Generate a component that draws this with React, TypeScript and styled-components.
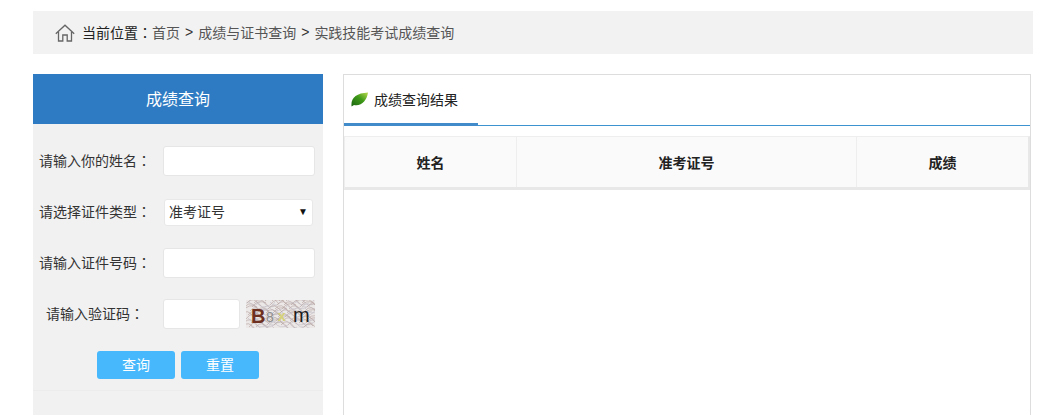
import styled, { createGlobalStyle } from "styled-components";

const GlobalStyle = createGlobalStyle`
  html, body {
    margin: 0;
    padding: 0;
    background: #fff;
    overflow: hidden;
  }
  body {
    font-family: "Liberation Sans", "Noto Sans CJK SC", sans-serif;
    font-size: 14px;
    color: #333;
  }
`;

const Page = styled.div`
  width: 1000px;
  height: 415px;
  margin-left: 33px;
  padding-top: 11px;
  box-sizing: border-box;
  overflow: hidden;
`;

const Crumbs = styled.div`
  height: 43px;
  background: #f2f2f2;
  display: flex;
  align-items: center;
  padding: 0 0 2px 22px;
  box-sizing: border-box;
  font-size: 14px;
  color: #555;
  svg {
    margin: 2px 7px 0 0;
  }
  b {
    font-weight: normal;
    color: #222;
  }
  i {
    font-style: normal;
    margin: 0 5px;
    color: #333;
  }
`;

// the source page centres its full-width colons, which the TC cut of the font does too
const Colon = styled.span`
  font-family: "Noto Sans CJK TC", sans-serif;
`;

const Main = styled.div`
  display: flex;
  gap: 20px;
  margin-top: 20px;
`;

const Side = styled.div`
  width: 290px;
  height: 341px;
  background: #f1f1f2;
  flex: none;
`;

const SideTitle = styled.div`
  height: 50px;
  line-height: 51px;
  background: #2e7bc3;
  color: #fff;
  font-size: 16px;
  text-align: center;
`;

const Form = styled.div`
  padding-top: 22px;
  height: 244px;
  border-bottom: 1px solid #ececec;
  display: flex;
  flex-direction: column;
  gap: 21px;
`;

const FormRow = styled.div`
  display: flex;
  align-items: center;
  height: 30px;
`;

const Label = styled.label<{ $indent?: number }>`
  width: 130px;
  padding: 0 0 2px ${(p) => p.$indent ?? 6}px;
  box-sizing: border-box;
  flex: none;
  color: #333;
  white-space: nowrap;
`;

const TextBox = styled.div<{ $short?: boolean }>`
  width: ${(p) => (p.$short ? 77 : 152)}px;
  height: 30px;
  background: #fff;
  border: 1px solid #e6e6e6;
  border-radius: 3px;
  box-sizing: border-box;
`;

const SelectBox = styled.div`
  width: 149px;
  height: 27px;
  margin-left: 1px;
  background: #fff;
  border: 1px solid #e8e8e8;
  border-radius: 3px;
  box-sizing: border-box;
  display: flex;
  align-items: center;
  justify-content: space-between;
  padding: 0 4px 2px 4px;
  color: #333;
  span {
    font-size: 10px;
    color: #111;
  }
`;

const Captcha = styled.svg`
  margin-left: 6px;
  flex: none;
`;

const Buttons = styled.div`
  display: flex;
  justify-content: center;
  gap: 6px;
  margin-top: 1px;
`;

const Btn = styled.div`
  width: 78px;
  height: 28px;
  line-height: 28px;
  text-align: center;
  background: #46b8fb;
  border-radius: 3px;
  color: #fff;
  font-size: 14px;
`;

const Panel = styled.div`
  width: 688px;
  height: 380px;
  border: 1px solid #ddd;
  box-sizing: border-box;
  flex: none;
`;

const TabBar = styled.div`
  height: 51px;
  border-bottom: 1px solid #3d93cf;
  box-sizing: border-box;
`;

const Tab = styled.div`
  width: 134px;
  height: 51px;
  box-sizing: border-box;
  border-bottom: 3px solid #428bca;
  display: flex;
  align-items: center;
  padding: 0 0 0 7px;
  font-size: 14px;
  color: #222;
  svg {
    margin-right: 6px;
  }
`;

const Table = styled.div`
  margin-top: 10px;
  height: 54px;
  display: grid;
  grid-template-columns: 171px 340px 1fr;
  background: #fafafa;
  border: 1px solid #eee;
  border-bottom: 3px solid #e8e8e8;
  border-right: 2px solid #e8e8e8;
  box-sizing: border-box;
`;

const HeadCell = styled.div`
  display: flex;
  align-items: center;
  justify-content: center;
  font-weight: bold;
  color: #222;
  border-left: 1px solid #eee;
  &:first-child {
    border-left: none;
  }
`;

const HomeIcon = () => (
  <svg width="20" height="18" viewBox="0 0 20 18" fill="none" stroke="#666" strokeWidth="1.3">
    <path d="M0.8 9.8 L10 1.2 L19.2 9.8" />
    <path d="M3.5 8 V17 H7.8 V11 H12.2 V17 H16.5 V8" />
  </svg>
);

const LeafIcon = () => (
  <svg width="17" height="15" viewBox="0 0 17 15">
    <defs>
      <linearGradient id="leaf" x1="0" y1="1" x2="1" y2="0">
        <stop offset="0" stopColor="#1a6312" />
        <stop offset="0.55" stopColor="#3f9a18" />
        <stop offset="1" stopColor="#bcdc50" />
      </linearGradient>
    </defs>
    <path d="M0.6 14.6 C-0.6 6 5 1 17 0.4 C16 8 10.5 14.6 3 13 Z" fill="url(#leaf)" />
  </svg>
);

const CaptchaImage = () => {
  const lines = [];
  for (let i = 0; i < 110; i++) {
    const x = (i * 17) % 69;
    const y = (i * 11) % 28;
    lines.push(
      <path
        key={i}
        d={`M${x - 6} ${y} q 6 ${i % 2 ? -8 : 8} 14 ${i % 3 ? 3 : -4}`}
        fill="none"
        stroke={i % 2 ? "#b3a09c" : "#c2bcc4"}
        strokeWidth="0.6"
      />
    );
  }
  return (
    <Captcha width="69" height="28" viewBox="0 0 69 28">
      <rect width="69" height="28" fill="#ebe8e7" />
      {lines}
      <text x="5" y="23" fontFamily="Liberation Sans" fontWeight="bold" fontSize="20" fill="#6e3020">B</text>
      <text x="20" y="22" fontFamily="Liberation Sans" fontSize="14" fill="#8f8f8f">8</text>
      <text x="32" y="21" fontFamily="Liberation Sans" fontWeight="bold" fontSize="14" fill="#d6d27a">x</text>
      <text x="47" y="22" fontFamily="Liberation Sans" fontSize="20" fill="#1c1c1c">m</text>
    </Captcha>
  );
};

export default function App() {
  return (
    <>
      <GlobalStyle />
      <Page>
        <Crumbs>
          <HomeIcon />
          <b>当前位置<Colon>：</Colon></b>首页<i>&gt;</i>成绩与证书查询<i>&gt;</i>实践技能考试成绩查询
        </Crumbs>
        <Main>
          <Side>
            <SideTitle>成绩查询</SideTitle>
            <Form>
              <FormRow>
                <Label>请输入你的姓名<Colon>：</Colon></Label>
                <TextBox />
              </FormRow>
              <FormRow>
                <Label>请选择证件类型<Colon>：</Colon></Label>
                <SelectBox>准考证号<span>▼</span></SelectBox>
              </FormRow>
              <FormRow>
                <Label>请输入证件号码<Colon>：</Colon></Label>
                <TextBox />
              </FormRow>
              <FormRow>
                <Label $indent={13}>请输入验证码<Colon>：</Colon></Label>
                <TextBox $short />
                <CaptchaImage />
              </FormRow>
              <Buttons>
                <Btn>查询</Btn>
                <Btn>重置</Btn>
              </Buttons>
            </Form>
          </Side>
          <Panel>
            <TabBar>
              <Tab>
                <LeafIcon />
                成绩查询结果
              </Tab>
            </TabBar>
            <Table>
              <HeadCell>姓名</HeadCell>
              <HeadCell>准考证号</HeadCell>
              <HeadCell>成绩</HeadCell>
            </Table>
          </Panel>
        </Main>
      </Page>
    </>
  );
}
